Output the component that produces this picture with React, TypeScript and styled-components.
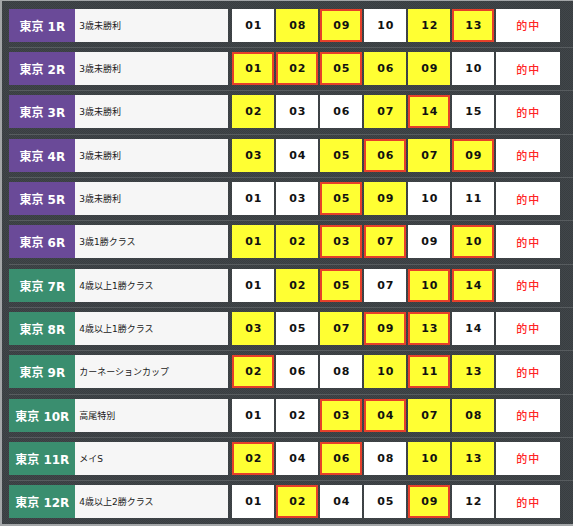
import styled, { createGlobalStyle } from 'styled-components'

const GlobalStyle = createGlobalStyle`
	html, body {
		margin: 0;
		padding: 0;
		background: #ffffff;
	}
`

type Pick = { n: string; hit?: boolean; mark?: boolean }

type Race = {
	no: number
	name: string
	track: 'turf' | 'green'
	picks: Pick[]
}

const p = (n: string, flag = ''): Pick => ({
	n,
	hit: flag.includes('y'),
	mark: flag.includes('r'),
})

const races: Race[] = [
	{ no: 1, name: '3歳未勝利', track: 'turf', picks: [p('01'), p('08', 'y'), p('09', 'yr'), p('10'), p('12', 'y'), p('13', 'yr')] },
	{ no: 2, name: '3歳未勝利', track: 'turf', picks: [p('01', 'yr'), p('02', 'yr'), p('05', 'yr'), p('06', 'y'), p('09', 'y'), p('10')] },
	{ no: 3, name: '3歳未勝利', track: 'turf', picks: [p('02', 'y'), p('03'), p('06'), p('07', 'y'), p('14', 'yr'), p('15')] },
	{ no: 4, name: '3歳未勝利', track: 'turf', picks: [p('03', 'y'), p('04'), p('05', 'y'), p('06', 'yr'), p('07', 'y'), p('09', 'yr')] },
	{ no: 5, name: '3歳未勝利', track: 'turf', picks: [p('01'), p('03'), p('05', 'yr'), p('09', 'y'), p('10'), p('11')] },
	{ no: 6, name: '3歳1勝クラス', track: 'turf', picks: [p('01', 'y'), p('02', 'y'), p('03', 'yr'), p('07', 'yr'), p('09'), p('10', 'yr')] },
	{ no: 7, name: '4歳以上1勝クラス', track: 'green', picks: [p('01'), p('02', 'y'), p('05', 'yr'), p('07'), p('10', 'yr'), p('14', 'yr')] },
	{ no: 8, name: '4歳以上1勝クラス', track: 'green', picks: [p('03', 'y'), p('05'), p('07', 'y'), p('09', 'yr'), p('13', 'yr'), p('14')] },
	{ no: 9, name: 'カーネーションカップ', track: 'green', picks: [p('02', 'yr'), p('06'), p('08'), p('10', 'y'), p('11', 'yr'), p('13', 'y')] },
	{ no: 10, name: '高尾特別', track: 'green', picks: [p('01'), p('02'), p('03', 'yr'), p('04', 'yr'), p('07', 'y'), p('08', 'y')] },
	{ no: 11, name: 'メイS', track: 'green', picks: [p('02', 'yr'), p('04'), p('06', 'yr'), p('08'), p('10', 'y'), p('13', 'y')] },
	{ no: 12, name: '4歳以上2勝クラス', track: 'green', picks: [p('01'), p('02', 'yr'), p('04'), p('05'), p('09', 'yr'), p('12')] },
]

const Board = styled.div`
	width: 565px;
	border-style: solid;
	border-color: #a3a6a8;
	border-width: 1px 2px 2px 2px;
	padding: 3.7px 0 0 7.3px;
	background-color: #3c4144;
	background-image: repeating-conic-gradient(#393e41 0 25%, #41464a 0 50%);
	background-size: 2px 2px;
	font-family: 'DejaVu Sans', 'Noto Sans CJK JP', sans-serif;
`

const Row = styled.div<{ $last?: boolean }>`
	display: flex;
	align-items: stretch;
	padding: 4px 0 ${({ $last }) => ($last ? '5.7px' : '5.33px')};
	border-bottom: ${({ $last }) => ($last ? 'none' : '1px solid #575c5f')};
`

const RaceLabel = styled.div<{ $track: 'turf' | 'green' }>`
	width: 66px;
	height: 33px;
	display: flex;
	align-items: center;
	justify-content: center;
	background: ${({ $track }) => ($track === 'turf' ? '#6a4a98' : '#3a8e6f')};
	color: #ffffff;
	font-size: 12px;
	font-weight: bold;
	white-space: nowrap;
`

const RaceName = styled.div`
	width: 153px;
	height: 33px;
	box-sizing: border-box;
	padding-left: 4px;
	margin-right: 4px;
	display: flex;
	align-items: center;
	background: #f6f6f6;
	color: #1a1a1a;
	font-size: 9px;
	white-space: nowrap;
`

const Picks = styled.div`
	display: flex;
	gap: 2px;
`

const PickCell = styled.div<{ $hit?: boolean; $mark?: boolean }>`
	width: 42px;
	height: 33px;
	box-sizing: border-box;
	display: flex;
	align-items: center;
	justify-content: center;
	background: ${({ $hit }) => ($hit ? '#ffff33' : '#ffffff')};
	border: ${({ $mark }) => ($mark ? '2px solid #e6402a' : 'none')};
	color: #111111;
	font-size: 11px;
	font-weight: bold;
	letter-spacing: 1px;
	text-indent: 1px;
`

const Result = styled.div`
	width: 64px;
	height: 33px;
	margin-left: 2px;
	display: flex;
	align-items: center;
	justify-content: center;
	background: #ffffff;
	color: #ff2424;
	font-size: 11px;
	font-weight: 500;
	letter-spacing: 1px;
`

export default function App() {
	return (
		<>
			<GlobalStyle />
			<Board>
				{races.map((race, i) => (
					<Row key={race.no} $last={i === races.length - 1}>
						<RaceLabel $track={race.track}>東京 {race.no}R</RaceLabel>
						<RaceName>{race.name}</RaceName>
						<Picks>
							{race.picks.map((pick, j) => (
								<PickCell key={j} $hit={pick.hit} $mark={pick.mark}>
									{pick.n}
								</PickCell>
							))}
						</Picks>
						<Result>的中</Result>
					</Row>
				))}
			</Board>
		</>
	)
}
